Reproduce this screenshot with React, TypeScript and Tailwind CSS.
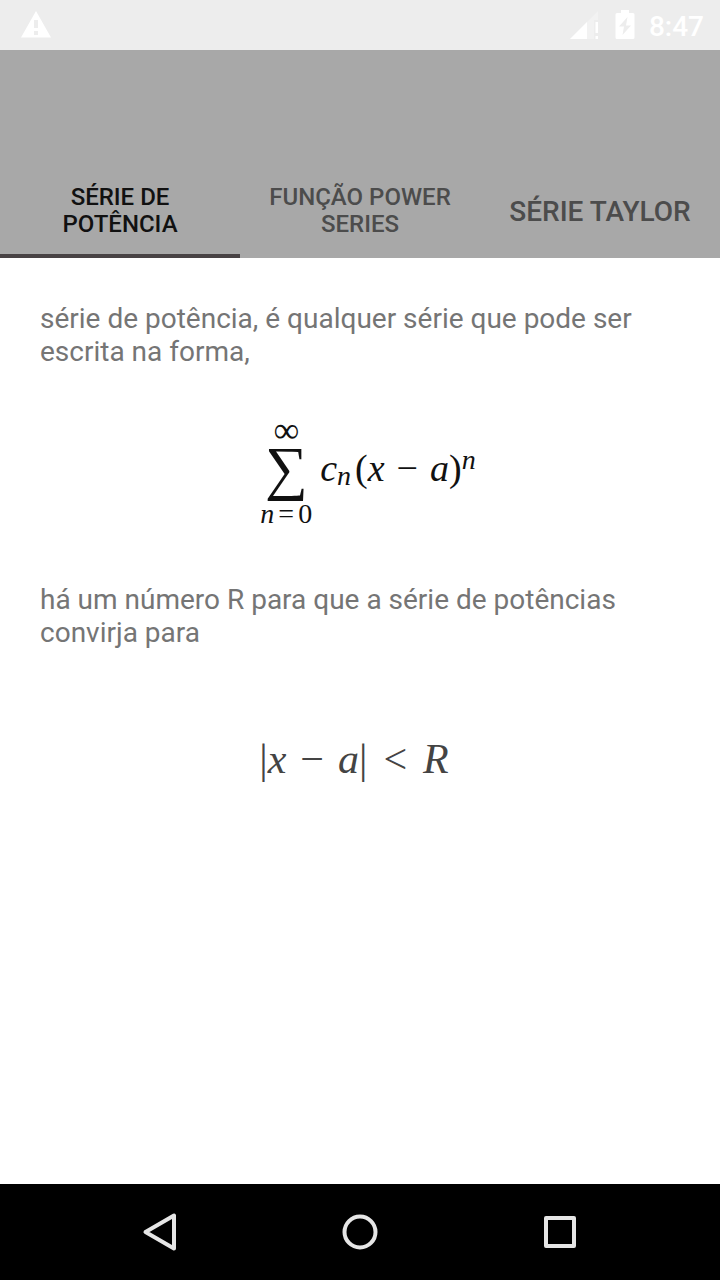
import React from "react";

type Tab = {
  id: string;
  label: string;
  size: string;
};

const TABS: Tab[] = [
  { id: "potencia", label: "Série de potência", size: "text-[24px] leading-[27px]" },
  { id: "funcao", label: "Função Power Series", size: "text-[24px] leading-[27px]" },
  { id: "taylor", label: "Série Taylor", size: "text-[28px] leading-[33px]" },
];

function StatusBar() {
  return (
    <div className="flex h-[50px] items-center justify-between bg-[#ededed] pr-4 pl-5 text-white">
      <svg viewBox="0 0 32 28" className="h-7 w-8" fill="currentColor" aria-hidden="true">
        <path
          fillRule="evenodd"
          d="M16 0 31 26.500H1L16 0ZM14 9v8h4V9h-4Zm0 11v4h4v-4h-4Z"
        />
      </svg>
      <div className="flex items-center">
        <svg viewBox="0 0 30 30" className="h-[30px] w-[30px]" fill="currentColor" aria-hidden="true">
          <path d="M29 1v9h-4v19H1L29 1Z" opacity="0.3" />
          <path d="M18 12v17H1l17-17Z" />
          <path d="M26.500 12h2.500v11h-2.500zM26.500 26h2.500v3h-2.500z" />
        </svg>
        <svg viewBox="0 0 20 30" className="ml-4 h-[30px] w-5" fill="currentColor" aria-hidden="true">
          <path
            fillRule="evenodd"
            d="M6 0h8v3h4q1.500 0 1.500 1.500v23q0 1.500-1.500 1.500H2q-1.500 0-1.500-1.500v-23q0-1.500 1.500-1.500h4V0Zm6.500 7-8.500 9.500h5l-1.500 8.500 8.500-9.500h-5L12.500 7Z"
          />
        </svg>
        <span className="ml-[14px] pt-[2px] text-[28px] leading-[33px] font-medium">8:47</span>
      </div>
    </div>
  );
}

function TabBar({ active, onSelect }: { active: string; onSelect: (id: string) => void }) {
  return (
    <header className="bg-[#a8a8a8] pt-28">
      <div role="tablist" className="grid h-24 grid-cols-3">
        {TABS.map((tab) => (
          <button
            key={tab.id}
            type="button"
            role="tab"
            aria-selected={tab.id === active}
            onClick={() => onSelect(tab.id)}
            className={`border-b-4 px-6 pt-[6px] text-center font-medium uppercase ${tab.size} ${
              tab.id === active
                ? "border-[#484244] text-[#111111]"
                : "border-transparent text-[#4c4c4c]"
            }`}
          >
            {tab.label}
          </button>
        ))}
      </div>
    </header>
  );
}

function SeriesFormula() {
  return (
    <div className="flex items-center justify-center gap-2 pb-2 pl-4 font-['Liberation_Serif',serif] text-[#111111]">
      <div className="flex flex-col items-center">
        <span className="text-[36px] leading-[20px]">∞</span>
        <span className="mt-1 text-[60px] leading-[48px]">∑</span>
        <span className="mt-3 flex gap-1 text-[28px] leading-[20px]">
          <i>n</i>
          <span>=</span>
          <span>0</span>
        </span>
      </div>
      <div className="flex items-center pb-2 text-[38px] leading-[40px]">
        <i>c</i>
        <i className="pt-4 text-[28px] leading-[28px]">n</i>
        <span className="ml-1">(</span>
        <i>x</i>
        <span className="mx-3">−</span>
        <i>a</i>
        <span>)</span>
        <i className="pb-4 text-[28px] leading-[28px]">n</i>
      </div>
    </div>
  );
}

function RadiusFormula() {
  return (
    <div className="flex items-center justify-center pr-3 font-['Liberation_Serif',serif] text-[42px] leading-[40px] text-[#444444]">
      <span>|</span>
      <i>x</i>
      <span className="mx-[14px]">−</span>
      <i>a</i>
      <span>|</span>
      <span className="mx-4">&lt;</span>
      <i>R</i>
    </div>
  );
}

function NavBar() {
  return (
    <nav className="flex h-24 items-center justify-center gap-[152px] bg-black text-[#e6e6e6]">
      <button type="button" aria-label="Voltar" className="h-12 w-12">
        <svg viewBox="0 0 48 48" fill="none" stroke="currentColor" strokeWidth="4" strokeLinejoin="round">
          <path d="M38 7.500v33L9.500 24Z" />
        </svg>
      </button>
      <button type="button" aria-label="Início" className="h-12 w-12">
        <svg viewBox="0 0 48 48" fill="none" stroke="currentColor" strokeWidth="4">
          <circle cx="24" cy="24" r="15.500" />
        </svg>
      </button>
      <button type="button" aria-label="Recentes" className="h-12 w-12">
        <svg viewBox="0 0 48 48" fill="none" stroke="currentColor" strokeWidth="4" strokeLinejoin="round">
          <rect x="10" y="10" width="28" height="28" />
        </svg>
      </button>
    </nav>
  );
}

export default function App() {
  const [active, setActive] = React.useState("potencia");

  return (
    <div className="flex min-h-screen flex-col bg-white font-[Roboto,sans-serif]">
      <StatusBar />
      <TabBar active={active} onSelect={setActive} />
      <main className="flex-1 px-10 pt-11 text-[28px] leading-[33px] text-[#757575]">
        <p>série de potência, é qualquer série que pode ser escrita na forma,</p>
        <div className="flex h-[215px] items-center justify-center">
          <SeriesFormula />
        </div>
        <p>há um número R para que a série de potências convirja para</p>
        <div className="flex h-[220px] items-center justify-center">
          <RadiusFormula />
        </div>
      </main>
      <NavBar />
    </div>
  );
}
